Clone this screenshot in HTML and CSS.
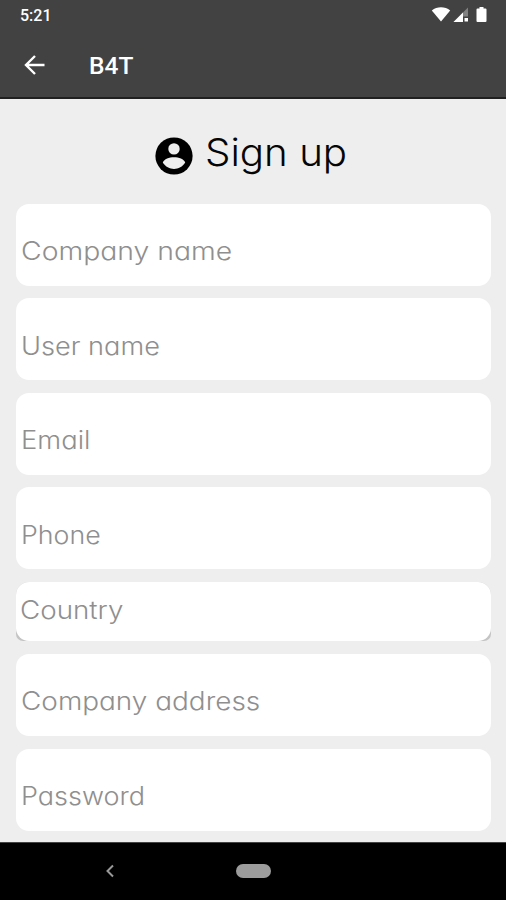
FILE: index.html
```html
<!DOCTYPE html>
<html lang="en">
<head>
<meta charset="utf-8">
<title>B4T - Sign up</title>
<link rel="stylesheet" href="styles.css">
</head>
<body>
<header class="top">
  <div class="status">
    <span class="time">5:21</span>
    <svg class="status-icons" width="60" height="20" viewBox="0 0 60 20">
      <path fill="#fff" d="M1.800 4.500C7 0.300 15 0.300 20.200 4.500L11 15.500Z"/>
      <path fill="#818181" d="M38 1.500V16H23.500Z"/>
      <path fill="#fff" d="M33 6.500V16H23.500Z"/>
      <path fill="#424242" d="M33 10.500H39V17H33Z"/>
      <path fill="#fff" d="M34.500 12h3.500v3.500h-3.500Z"/>
      <path fill="#fff" d="M49.500 1h4v1.500h2q1 0 1 1V15q0 1-1 1h-8q-1 0-1-1V3.500q0-1 1-1h2Z"/>
    </svg>
  </div>
  <div class="appbar">
    <svg class="back" width="22" height="22" viewBox="0 0 22 22"><path d="M20.500 11H2.500M11 2L2 11L11 20"/></svg>
    <span class="app-name">B4T</span>
  </div>
</header>
<main class="page">
  <h1 class="heading">
    <svg class="avatar" width="38" height="38" viewBox="0 0 38 38">
      <circle cx="19" cy="19" r="18.600"/>
      <circle class="cutout" cx="19" cy="11.900" r="5.700"/>
      <path class="cutout" d="M7.800 25.500C10.500 18.500 27.500 18.500 30.200 25.500C25 34 13 34 7.800 25.500Z"/>
    </svg>
    <span class="title">Sign up</span>
  </h1>
  <form class="form">
    <div class="field"><span class="label company">Company name</span></div>
    <div class="field"><span class="label user">User name</span></div>
    <div class="field"><span class="label email">Email</span></div>
    <div class="field"><span class="label phone">Phone</span></div>
    <div class="select"><div class="field field-select"><span class="label country">Country</span></div></div>
    <div class="field"><span class="label address">Company address</span></div>
    <div class="field"><span class="label password">Password</span></div>
  </form>
</main>
<nav class="navbar">
  <svg class="nav-back" width="10" height="14" viewBox="0 0 10 14"><path d="M8 1.500L2.500 7L8 12.500"/></svg>
  <span class="home"></span>
</nav>
</body>
</html>
```
FILE: styles.css
```css
* { box-sizing: border-box; }
body {
  margin: 0;
  height: 900px;
  display: flex;
  flex-direction: column;
  overflow: hidden;
  background: #eee;
  font-family: Inter, "Liberation Sans", sans-serif;
}
.top {
  height: 99px;
  flex: none;
  background: #424242;
  border-bottom: 2px solid #202020;
  color: #fff;
  font-family: Roboto, sans-serif;
}
.status {
  height: 32px;
  padding: 6px 16px 0 20px;
  display: flex;
  justify-content: space-between;
}
.time { font-size: 16px; line-height: 20px; font-weight: 500; }
.status-icons { display: block; }
.appbar {
  height: 65px;
  padding-left: 24px;
  display: flex;
  align-items: center;
}
.back { fill: none; stroke: #fff; stroke-width: 2.400; }
.app-name { margin-left: 43px; font-size: 24.500px; font-weight: 500; line-height: 30px; padding-top: 2px; }
.page { height: 743px; flex: none; padding: 0 15.500px 0 16px; }
.heading {
  margin: 0;
  height: 104.500px;
  padding: 29px 0 0 138.500px;
  display: flex;
  align-items: flex-start;
  font-weight: 300;
}
.avatar { margin-top: 8.500px; flex: none; }
.cutout { fill: #eee; }
.title {
  margin-left: 12px;
  font-size: 38px;
  line-height: 48px;
  color: #050505;
  white-space: nowrap;
  font-feature-settings: "cv11";
  transform: scaleX(1.060);
  transform-origin: left;
}
.form { display: flex; flex-direction: column; gap: 12.600px; }
.field {
  height: 82px;
  padding: 31.500px 0 0 5px;
  border-radius: 13px;
  background: #fff;
}
.select { height: 59.500px; border-radius: 13px 13px 7px 7px; background: #c4c4c4; }
.field-select { height: 59.500px; padding: 12px 0 0 4px; }
.label {
  display: block;
  width: fit-content;
  font-size: 25px;
  line-height: 32px;
  font-weight: 300;
  color: #8f8f8f;
  white-space: nowrap;
  font-feature-settings: "cv11";
  transform-origin: left;
}
.company { transform: scaleX(1.134); }
.user { transform: scaleX(1.086); }
.email { transform: scaleX(1.095); }
.phone { transform: scaleX(1.070); }
.country { transform: scaleX(1.110); }
.address { transform: scaleX(1.117); }
.password { transform: scaleX(1.080); }
.navbar {
  height: 58px;
  flex: none;
  display: flex;
  align-items: center;
  padding: 0 0 2px 105px;
  background: #000;
  border-top: 1px solid #444;
}
.nav-back { fill: none; stroke: #999; stroke-width: 2; }
.home { width: 35px; height: 14px; margin-left: 121px; border-radius: 7px; background: #9c9c9c; }
```
